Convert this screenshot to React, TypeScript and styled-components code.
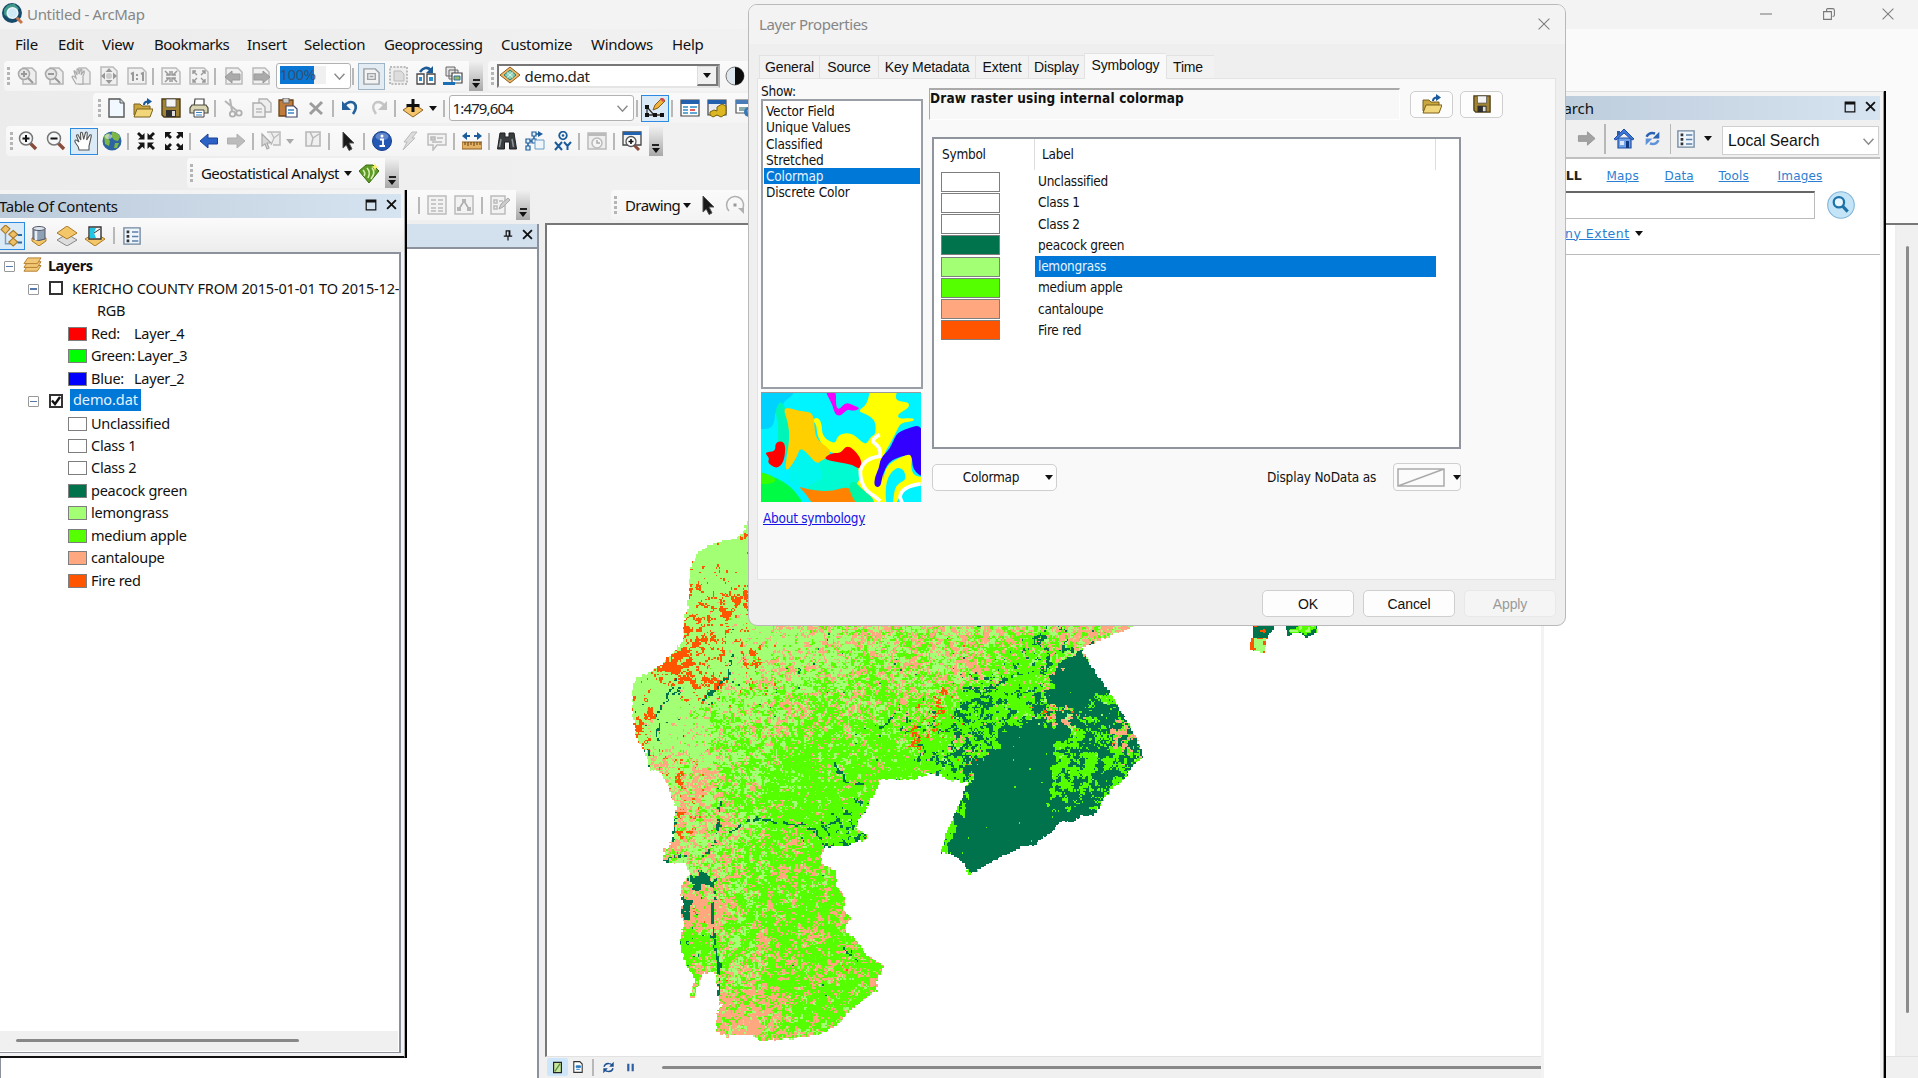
import React from "react";
import styled, { createGlobalStyle, css } from "styled-components";

const UI = `"Noto Sans", "Open Sans", sans-serif`;
const DIALOG = `"DejaVu Sans Condensed", "DejaVu Sans", sans-serif`;
const SYS = `"Liberation Sans", Arial, sans-serif`;

const Global = createGlobalStyle`
  * { box-sizing: border-box; }
  body { margin: 0; overflow: hidden; background: #f0f0f0; }
  svg { display: block; flex: none; }
`;

/* ---------- icons (20 x 20 grid) ---------- */

const glyphs: Record<string, React.ReactNode> = {
  app: (<><circle cx="9.5" cy="9.5" r="9.5" fill="#17496b" /><path d="M2 6q4-6 10-5l4 4-3 7-6 3-5-4z" fill="#3f9a8a" /><circle cx="10" cy="9.500" r="5" fill="#cfe9f7" stroke="#eef4f8" strokeWidth="1.5" /><path d="M14 14l5 5" stroke="#c8744a" strokeWidth="2.8" /></>),
  pageZoomIn: (<><path d="M6 2h9l4 4v12H6z" fill="#eee" stroke="#b4b4b4" strokeWidth="1.5" /><circle cx="7" cy="8" r="5.5" fill="#e6e6e6" stroke="#aaa" strokeWidth="1.6" /><path d="M4 8h6M7 5v6M11 12l5 5" stroke="#999" strokeWidth="2" /></>),
  pageZoomOut: (<><path d="M6 2h9l4 4v12H6z" fill="#eee" stroke="#b4b4b4" strokeWidth="1.5" /><circle cx="7" cy="8" r="5.5" fill="#e6e6e6" stroke="#aaa" strokeWidth="1.6" /><path d="M4 8h6M11 12l5 5" stroke="#999" strokeWidth="2" /></>),
  pagePan: (<><path d="M8 2h7l4 4v12H8z" fill="#eee" stroke="#bbb" strokeWidth="1.5" /><path d="M5 18L1 11q1-2 4 1L3 5q1-1 3 4L6 3q2-1 2 5l2-5q2 0 0 6l3-4q1 1-1 5v8z" fill="#f0f0f0" stroke="#aaa" strokeWidth="1.2" /></>),
  pageFull: (<><path d="M2 1h12l4 4v14H2z" fill="#f0f0f0" stroke="#bbb" strokeWidth="1.5" /><path d="M10 2l3.500 4h-7zM10 18l3.500-4h-7zM2 10l4-3.500v7zM18 10l-4-3.500v7z" fill="#999" /><circle cx="10" cy="10" r="3" fill="#ccc" /></>),
  pageOne: (<><path d="M1 2h14l4 4v12H1z" fill="#f0f0f0" stroke="#bbb" strokeWidth="1.5" /><path d="M4 8l2-1v8M14 8l2-1v8M10 8v2M10 12v2" stroke="#999" strokeWidth="2" fill="none" /></>),
  pageIn: (<><path d="M1 2h14l4 4v12H1z" fill="#f3f3f3" stroke="#bbb" strokeWidth="1.5" /><path d="M4 5l4 4M16 5l-4 4M4 16l4-4M16 16l-4-4M5 9h4V5M11 5v4h4M5 12h4v4M15 12h-4v4" stroke="#999" strokeWidth="1.5" fill="none" /></>),
  pageOut: (<><path d="M1 2h14l4 4v12H1z" fill="#f3f3f3" stroke="#bbb" strokeWidth="1.5" /><path d="M4 8V5h3M4 5l4 4M13 5h3v3M16 5l-4 4M4 13v3h3M4 16l4-4M16 13v3h-3M16 16l-4-4" stroke="#999" strokeWidth="1.4" fill="none" /></>),
  pageBack: (<><path d="M2 2h12l4 4v12H2z" fill="#f0f0f0" stroke="#bbb" strokeWidth="1.5" /><path d="M1 11l7-6v3h8v6H8v3z" fill="#aaa" stroke="#999" /></>),
  pageNext: (<><path d="M2 2h12l4 4v12H2z" fill="#f0f0f0" stroke="#bbb" strokeWidth="1.5" /><path d="M19 11l-7-6v3H3v6h9v3z" fill="#aaa" stroke="#999" /></>),
  pageDraft: (<><path d="M2 2h12l4 4v12H2z" fill="#f3f3f3" stroke="#9aa0a6" strokeWidth="1.5" /><path d="M6 7h8v6H6zM8 10h4" fill="#eee" stroke="#a0a4a8" strokeWidth="1.5" /></>),
  pageFocus: (<><path d="M1 1h17v17H1z" fill="#eee" stroke="#bbb" strokeWidth="2" strokeDasharray="2 1.4" /><path d="M5 5h7l3 3v7H5z" fill="#ddd" stroke="#bbb" /></>),
  layouts: (<><path d="M4 6q5-7 11-2" fill="none" stroke="#1c5c96" strokeWidth="2.6" /><path d="M17 0v7h-7z" fill="#1c5c96" /><path d="M1 8h7v10H1zM11 8h8v10h-8z" fill="#fff" stroke="#444" strokeWidth="1.3" /><path d="M3 11h3v4H3zM13 11h4v4h-4z" fill="#2a8fd0" /></>),
  pagesStack: (<><path d="M3 1h9v9H3zM6 4h9v9H6z" fill="#e5e5e5" stroke="#666" /><path d="M9 7h10v10H9z" fill="#fff" stroke="#444" strokeWidth="1.2" /><path d="M11 10h6v4h-6z" fill="#93b86c" stroke="#2b6e9b" /><path d="M0 16h12v3H0z" fill="#1b6fb5" /></>),
  raster: (<><path d="M10 1l10 8-10 8L0 9z" fill="#efb765" stroke="#8b5a1c" /><path d="M10 4l6 5-6 5-6-5z" fill="#8fd0b8" stroke="#2b7d70" /><path d="M7 6.5l6 5M13 6.5l-6 5" stroke="#d8f4ea" /></>),
  contrast: (<><circle cx="10" cy="10" r="9" fill="#dfe7ee" stroke="#777" /><path d="M10 1a9 9 0 010 18z" fill="#0c0c0c" /></>),
  newDoc: (<><path d="M2 1h11l4 4v14H2z" fill="#f1f8ff" stroke="#555" strokeWidth="1.4" /><path d="M13 1v4h4" fill="#cfd9e2" stroke="#555" /></>),
  open: (<><path d="M1 6h6l2 2h8v9H1z" fill="#c9a63e" stroke="#7a611d" /><path d="M4 11h16l-3 8H1z" fill="#f2d67a" stroke="#7a611d" /><path d="M11 7q0-3.500 4-3.500" fill="none" stroke="#1a5a9a" strokeWidth="2" /><path d="M14 0l5 3.500-5 3.500z" fill="#1a5a9a" /></>),
  save: (<><path d="M1 1h18v18H3l-2-2z" fill="#a18334" stroke="#4c3c12" strokeWidth="1.4" /><path d="M5 1h10v8H5z" fill="#f4f4f4" stroke="#555" strokeWidth=".8" /><path d="M5 12h10v7H5z" fill="#2e2e2e" /><path d="M11 13h3v5h-3z" fill="#ddd" /></>),
  print: (<><path d="M6 1h9v8H5z" fill="#fff" stroke="#444" strokeWidth="1.2" /><path d="M3 7h14l2 3v5H1v-5z" fill="#d8d4b4" stroke="#4c4a3c" strokeWidth="1.2" /><path d="M5 12h10v7H5z" fill="#fff" stroke="#444" /><path d="M7 14.500h6M7 17h6" stroke="#3c86c8" /></>),
  cut: (<><path d="M2 3l12 10M7 1l2 12" stroke="#b5b5b5" strokeWidth="2" /><circle cx="16" cy="15" r="2.700" fill="none" stroke="#b0b0b0" strokeWidth="1.800" /><circle cx="9.500" cy="16" r="2.700" fill="none" stroke="#b0b0b0" strokeWidth="1.800" /></>),
  copy: (<><path d="M7 1h8l4 4v9H7z" fill="#eee" stroke="#b2b2b2" strokeWidth="1.4" /><path d="M1 5h8l4 4v10H1z" fill="#f0f0f0" stroke="#adadad" strokeWidth="1.4" /><path d="M4 11h6M4 14h6" stroke="#bbb" strokeWidth="1.500" /></>),
  paste: (<><path d="M1 2h14v16H1z" fill="#bf7c3a" stroke="#6d4217" strokeWidth="1.3" /><path d="M5 0h6v5H5z" fill="#ccc" stroke="#666" /><path d="M8 8h8l3 3v8H8z" fill="#fff" stroke="#446" strokeWidth="1.2" /><path d="M10 12h6M10 15h6" stroke="#3c86c8" strokeWidth="1.300" /></>),
  del: <path d="M4 5l12 11M16 4L4 16" stroke="#9d9d9d" strokeWidth="3" />,
  undo: (<><path d="M4 8q5-6 10-3 4 4-1 11" fill="none" stroke="#23609c" strokeWidth="2.600" /><path d="M2 3v9h9z" fill="#23609c" /></>),
  redo: (<><path d="M16 8q-5-6-10-3-4 4 1 11" fill="none" stroke="#c6c6c6" strokeWidth="2.400" /><path d="M18 3v9H9z" fill="#c2c2c2" /></>),
  addData: (<><path d="M10 5.500l10 6.500-10 7L0 12z" fill="#f4c56c" stroke="#8f6420" /><path d="M10 1v13M3.500 7.500h13" stroke="#111" strokeWidth="3" /></>),
  editor: (<><path d="M2 9l7 8h9M2 9v8h7" stroke="#333" fill="none" strokeWidth="1.300" /><path d="M0 7h4v4H0zM0 15h4v4H0zM8 15h4v4H8zM15 15h4v4h-4z" fill="#111" /><path d="M8 12l2-5 7-7 3 3-7 7z" fill="#efb23b" stroke="#8a5b18" /><path d="M16 0l3 3" stroke="#d64b4b" strokeWidth="3" /></>),
  tableWin: (<><path d="M1 2h18v16H1z" fill="#fff" stroke="#444" strokeWidth="1.200" /><path d="M1 2h18v4H1z" fill="#2261ad" /><path d="M3 9h5M3 12h5M3 15h5M10 9h7M10 15h7" stroke="#2e8ac8" strokeWidth="1.500" /><path d="M10 12h5" stroke="#d33" strokeWidth="1.600" /></>),
  catalog: (<><path d="M1 2h18v15H1z" fill="#e7ecf2" stroke="#444" strokeWidth="1.200" /><path d="M1 2h18v4H1z" fill="#2261ad" /><path d="M10 9l5-3 4 2v8l-5 3-4-2-4 2-3-2v-3l4-2 3 1z" fill="#dcb722" stroke="#77610c" /></>),
  searchWin: (<><path d="M1 2h18v13H1z" fill="#fff" stroke="#555" strokeWidth="1.200" /><path d="M1 2h18v4H1z" fill="#4a7db8" /><path d="M4 9h12v4H4z" fill="#8aa" /><circle cx="14" cy="14" r="5" fill="#3478b8" /><path d="M12 12q3-2 4 1t-3 3z" fill="#80c060" /></>),
  zoomIn: (<><path d="M12 12l6 6" stroke="#8a4c3a" strokeWidth="3.400" /><circle cx="8" cy="7.500" r="6.500" fill="#f5f7f8" stroke="#777" strokeWidth="1.500" /><path d="M4.500 7.500h7M8 4v7" stroke="#111" strokeWidth="2" /></>),
  zoomOut: (<><path d="M12 12l6 6" stroke="#8a4c3a" strokeWidth="3.400" /><circle cx="8" cy="7.500" r="6.500" fill="#f5f7f8" stroke="#777" strokeWidth="1.500" /><path d="M4.500 7.500h7" stroke="#111" strokeWidth="2" /></>),
  hand: <path d="M5 19q0-3-3-6.500-2-2.500-.5-3.500 1-.5 3.500 2L2.500 5q0-1.600 1.400-1.200L6.800 9 6.500 2q.8-1.600 1.900 0L9.700 8.300 11.500 1.500q1.200-1.200 1.800.4L12.700 9l3.100-5q1.500-.8 1.500.9L16 11l-1 4v4z" fill="#fff" stroke="#555" strokeWidth="1.100" />,
  globe: (<><circle cx="10" cy="10" r="9.500" fill="#2c63a0" /><path d="M10 1q6 0 8 5l-2 4-4-1-3-4zM13 12l4 0-2 5-3 0zM2 5q3-3 6-3L6 7l2 3-1 5-4-2z" fill="#7cb648" /><ellipse cx="6.500" cy="5.500" rx="3.500" ry="2.500" fill="#fff" opacity=".5" /></>),
  fixedIn: <path d="M8.500 2v6.500H2l2.300-2.200L1 3l2-2 3.300 3.300zM11.500 2v6.500H18l-2.300-2.200L19 3l-2-2-3.300 3.300zM8.500 18v-6.500H2l2.300 2.200L1 17l2 2 3.300-3.300zM11.500 18v-6.500H18l-2.300 2.200L19 17l-2 2-3.300-3.300z" fill="#151515" />,
  fixedOut: <path d="M1 1h6.500L5.300 3.200 8 6 6 8 3.200 5.300 1 7.500zM19 1h-6.500l2.200 2.200L12 6l2 2 2.800-2.700L19 7.500zM1 19h6.500l-2.200-2.200L8 14l-2-2-2.800 2.700L1 12.500zM19 19h-6.500l2.200-2.200L12 14l2-2 2.800 2.700 2.200-2.200z" fill="#151515" />,
  back: <path d="M1 10l8-7v4h9.500v6H9v4z" fill="#2c62c6" stroke="#1c439a" />,
  fwd: <path d="M19 10l-8-7v4H1.500v6H11v4z" fill="#bcbcbc" stroke="#b0b0b0" />,
  fwdDark: <path d="M19 10l-8-7v4H1.500v6H11v4z" fill="#a2a2a2" stroke="#979797" />,
  selFeat: (<><path d="M6 1h13v13h-7" fill="#eee" stroke="#bbb" strokeWidth="1.500" /><path d="M10 1l3 6 5-4M13 7l-3 7" fill="none" stroke="#bbb" strokeWidth="1.200" /><path d="M1 3l9 9H6l2 5-2 1-2-5-3 2z" fill="#d9d9d9" stroke="#aaa" strokeWidth="1.200" /></>),
  clearSel: (<><path d="M3 1h14v14H3z" fill="#f0f0f0" stroke="#b8b8b8" strokeWidth="1.600" /><path d="M7 1l3 6 6-4M10 7l-2 8" fill="none" stroke="#b8b8b8" strokeWidth="1.500" /></>),
  cursor: <path d="M5 1l11 11H11l3 6-3 1.500L8.300 14 5 17z" fill="#1a1a1a" stroke="#555" />,
  info: (<><circle cx="10" cy="10" r="9.500" fill="#2358b4" stroke="#163f8c" /><ellipse cx="10" cy="5.500" rx="6.500" ry="3.800" fill="#fff" opacity=".28" /><circle cx="10" cy="5" r="1.500" fill="#fff" /><path d="M8 8.500h3v6M7.500 15h5.500" stroke="#fff" strokeWidth="1.800" fill="none" /></>),
  bolt: <path d="M12 1l5 0-5 6 3 0L3 19l4-8H4z" fill="#dcdcdc" stroke="#bbb" />,
  popup: (<><path d="M1 3h18v11h-9l-4 5v-5H1z" fill="#f2f2f2" stroke="#bdbdbd" strokeWidth="1.500" /><path d="M4 6h4v3H4zM10 7h6M5 11h10" stroke="#bbb" strokeWidth="1.500" fill="#ccc" /></>),
  measure: (<><path d="M0 11h20v7H0z" fill="#e3b264" stroke="#8d5d20" /><path d="M3 11v3M6 11v4M9 11v3M12 11v4M15 11v3M18 11v3" stroke="#5f3c10" /><path d="M0 5l5-4v3h3v2H5v3zM20 5l-5-4v3h-3v2h3v3z" fill="#1b5d9c" /></>),
  find: (<><path d="M3 2h5v4h4V2h5l2.500 16h-7V11h-5v7h-7z" fill="#3a3d40" stroke="#1d1f20" /><path d="M4 8l-1.500 8M15 8l1.500 8" stroke="#8f9498" strokeWidth="1.500" /></>),
  route: (<><path d="M3 17V10h6V3h5" fill="none" stroke="#1b5d9c" strokeWidth="1.500" /><path d="M1 15h4v4H1zM1 8h4v4H1zM7 8h4v4H7zM7 1h4v4H7z" fill="#e6f1fa" stroke="#1b5d9c" strokeWidth="1.200" /><path d="M13 0l5 3-5 3z" fill="#1b5d9c" /><path d="M10 9h9v9h-9z" fill="#eef5fb" stroke="#6a9cc4" /></>),
  xy: (<><circle cx="10" cy="4.500" r="3.800" fill="none" stroke="#1b5d9c" strokeWidth="1.800" /><circle cx="10" cy="4.500" r="1.300" fill="#1b5d9c" /><path d="M2 11l7 8M9 11l-7 8M11 11l3.500 4L18 11M14.500 15v4" stroke="#1b5d9c" strokeWidth="2" fill="none" /></>),
  time: (<><path d="M1 2h18v16H1z" fill="#eee" stroke="#bbb" strokeWidth="1.500" /><path d="M1 2h18v3H1z" fill="#bbb" /><circle cx="10" cy="12" r="5" fill="#f5f5f5" stroke="#bbb" strokeWidth="1.500" /><path d="M10 9v3h3" stroke="#aaa" fill="none" strokeWidth="1.500" /></>),
  viewer: (<><path d="M1 1h18v13H1z" fill="#f4f4f4" stroke="#444" strokeWidth="1.300" /><path d="M1 1h18v3H1z" fill="#2261ad" /><path d="M12 14l5 5" stroke="#8a4c3a" strokeWidth="3" /><circle cx="9" cy="10.500" r="5" fill="#fff" stroke="#555" strokeWidth="1.300" /><path d="M6.500 10.500h5M9 8v5" stroke="#111" strokeWidth="1.600" /></>),
  geostat: (<><path d="M0 8l7-6 7 0 6 6-10 12z" fill="#5d9a26" stroke="#3d6e12" /><path d="M4 7q3 3 1 6M8 5q4 4 1 10M13 5q4 4-1 11" stroke="#d5efae" strokeWidth="1.600" fill="none" /><path d="M16 0l1 3 3 1-3 1-1 3-1-3-3-1 3-1z" fill="#f6ee66" /></>),
  attr: (<><path d="M1 1h18v18H1z" fill="#f2f2f2" stroke="#bcbcbc" strokeWidth="1.500" /><path d="M4 5h5M4 9h5M4 13h5M11 5h5M11 9h5M11 13h5M4 16h5M11 16h5" stroke="#bbb" strokeWidth="1.600" /></>),
  sketch: (<><path d="M1 1h18v18H1z" fill="#f2f2f2" stroke="#bcbcbc" strokeWidth="1.500" /><path d="M5 14l5-8 5 8" stroke="#aaa" strokeWidth="1.500" fill="none" /><path d="M3 12h4v4H3zM8 4h4v4H8zM13 12h4v4h-4z" fill="#b4b4b4" /></>),
  create: (<><path d="M1 1h14v18H1z" fill="#f2f2f2" stroke="#bcbcbc" strokeWidth="1.500" /><path d="M4 5h3v3H4zM4 11h3v3H4zM9 6h4" stroke="#bbb" strokeWidth="1.500" fill="none" /><path d="M9 14l2-5 7-6 2 2-7 7z" fill="#ccc" stroke="#aaa" /></>),
  rotate: (<><path d="M4 16a8.500 8.500 0 1113-1" fill="none" stroke="#b0b0b0" strokeWidth="1.500" /><path d="M13 13h6v6z" fill="#b0b0b0" /><path d="M8.500 8.500h3v3h-3z" fill="#999" /></>),
  byOrder: (<><path d="M5 8v9h5" stroke="#7a9ab8" fill="none" strokeWidth="1.300" /><path d="M5 0l4 3.500L5 8 1 4zM12 5l4 3.500-4 3.500-4-3.500zM12 12l4 3.500-4 3.500-4-3.500z" fill="#f0c068" stroke="#a97924" /><path d="M16 9h4M16 16h4" stroke="#2a6ba5" strokeWidth="1.800" /></>),
  bySource: (<><path d="M10 20l-7-5v-3h14v3z" fill="#f3c769" stroke="#a97924" /><path d="M4 2h12v11q-6 3-12 0z" fill="#8da0b4" stroke="#556" /><ellipse cx="10" cy="2.500" rx="6" ry="2" fill="#dce6ef" stroke="#556" /><path d="M7 5v9" stroke="#e6edf4" strokeWidth="2.500" /></>),
  byVis: (<><path d="M10 8l10 6-10 6-10-6z" fill="#ddd" stroke="#888" /><path d="M10 0l10 7-10 6L0 7z" fill="#f3c769" stroke="#a97924" /></>),
  bySel: (<><path d="M10 7l10 6-10 7-10-7z" fill="#f3c769" stroke="#a97924" /><path d="M4 1h12v12H4z" fill="#f4f4f4" stroke="#333" strokeWidth="1.400" /><path d="M5 2h6l-2 5 2 5H5z" fill="#22c4e4" /><path d="M9 7l6-4" stroke="#333" /></>),
  list: (<><path d="M1 1h18v18H1z" fill="#eef5fb" stroke="#7188a0" strokeWidth="1.500" /><path d="M4 4h3v3H4zM4 9h3v3H4zM4 14h3v3H4z" fill="#333" /><path d="M10 5.500h7M10 10.500h7M10 15.500h7" stroke="#5e7fa8" strokeWidth="1.500" /></>),
  layers: (<g fill="#f2c777" stroke="#b17e2c"><path d="M5 10h14l-4 6H1z" /><path d="M5 6h14l-4 6H1z" /><path d="M5 2h14l-4 6H1z" /></g>),
  home: (<><path d="M4 9h13v10H4z" fill="#6f9fe4" stroke="#1f4fa8" strokeWidth="1.200" /><path d="M10 0l10 10-2 1-8-7-8 7-2-1z" fill="#3e78d6" stroke="#1f4fa8" /><path d="M12 12h3v7h-3z" fill="#12397f" /><path d="M6 12h4v4H6z" fill="#dbe9fb" /><path d="M3 2h3v4H3z" fill="#2b5cb0" /></>),
  refresh: (<><path d="M3 8q3-6 10-4" fill="none" stroke="#2a62b4" strokeWidth="3" /><path d="M18 2v8h-8z" fill="#2a62b4" /><path d="M17 12q-3 6-10 4" fill="none" stroke="#5f93d8" strokeWidth="3" /><path d="M2 18v-8h8z" fill="#5f93d8" /></>),
  searchGo: (<><circle cx="10" cy="10" r="9.500" fill="#c4e4f8" stroke="#84b6d8" strokeWidth=".8" /><circle cx="8.500" cy="8" r="3.700" fill="#e8f6ff" stroke="#1e72a8" strokeWidth="1.600" /><path d="M11.300 11l3.500 3.700" stroke="#1e72a8" strokeWidth="2.200" /></>),
  dataView: (<><path d="M4 2h12v16H4z" fill="#c9e59a" stroke="#222" strokeWidth="1.800" /><path d="M6 16l8-12" stroke="#4f8a3a" strokeWidth="1.800" /></>),
  layoutView: (<><path d="M3 1h10l4 4v14H3z" fill="#fff" stroke="#333" strokeWidth="1.800" /><path d="M7 8h7v3H7zM7 14h6" fill="#2a7cc0" stroke="#2a7cc0" strokeWidth="1.500" /></>),
  refreshSm: (<><path d="M3 9q2-6 8-5 3 0 4 2M17 11q-2 6-8 5-3 0-4-2" fill="none" stroke="#1b5090" strokeWidth="2.200" /><path d="M18 1v8h-7zM2 19v-8h7z" fill="#1b5090" /></>),
  pause: <path d="M4 3h4v14H4zM12 3h4v14h-4z" fill="#2c60a4" />,
  pin: <path d="M6 2h8v9h3v2h-6v6H9v-6H3v-2h3zM8 4v7h3V4z" fill="#111" fillRule="evenodd" />,
  maxi: <path d="M1 1h18v18H1zM3 6v11h14V6z" fill="#111" fillRule="evenodd" />,
  close: <path d="M2 2l16 16M18 2L2 18" stroke="#111" strokeWidth="3.400" />,
  thinClose: <path d="M1 1l18 18M19 1L1 19" stroke="#7b7b7b" strokeWidth="1.700" />,
  minus: <path d="M0 10h20" stroke="#777" strokeWidth="1.700" />,
  restore: <path d="M1 6h13v13H1zM6 5V3q0-2 2-2h8q3 0 3 3v8q0 2-3 2" fill="none" stroke="#777" strokeWidth="1.800" />,
  chevron: <path d="M1 5l9 10 9-10" fill="none" stroke="#8a8a8a" strokeWidth="2.600" />,
};

const Icon = ({ name, size = 20 }: { name: string; size?: number }) => (
  <svg width={size} height={size} viewBox="0 0 20 20">{glyphs[name]}</svg>
);

/* ---------- toolbars ---------- */

const Screen = styled.div`
  position: relative; width: 1918px; height: 1078px; overflow: hidden;
  display: flex; flex-direction: column; color: #111; font: 15px/20px ${UI};
  background: linear-gradient(90deg, #ececec 0, #f0f0f0 30%, #f1f1f1 40%, #fafafa 80%);
  white-space: nowrap;
`;
const TitleBar = styled.header`
  height: 29px; flex: none; display: flex; align-items: center; background: #f3f3f3; color: #868686;
  padding: 0 24.500px 2px 2px; letter-spacing: -0.32px;
  svg:first-child { margin-right: 4px; }
`;
const Grow = styled.span`flex: 1;`;
const WinButtons = styled.span`display: flex; align-items: center; gap: 46.800px;`;
const MenuBar = styled.nav`height: 32px; flex: none; display: flex; align-items: center; padding: 0 0 2px 15px;`;
const MenuItem = styled.span<{ $w: number }>`width: ${(p) => p.$w}px; letter-spacing: ${(p) => (p.$w > 90 ? -0.5 : -0.3)}px; line-height: 30px;`;

const Row = styled.div<{ $h?: number }>`display: flex; flex: none; height: ${(p) => p.$h ?? 32}px;`;
const Bar = styled.div<{ $gap: number; $w: number }>`
  display: flex; align-items: center; flex: none; height: 30px; width: ${(p) => p.$w}px; margin-left: ${(p) => p.$gap}px;
  background: linear-gradient(#fafafa, #f4f4f4); border-radius: 4px 0 0 4px;
`;
const Slot = styled.span<{ $w: number; $gap: number; $on?: boolean }>`
  display: flex; align-items: center; justify-content: center; flex: none;
  width: ${(p) => p.$w}px; height: ${(p) => (p.$on ? 27 : 28)}px; margin-left: ${(p) => p.$gap}px;
  ${(p) => p.$on && css`background: #dbeaf7; border: 1.500px solid #2c8ae0;`}
`;
const Grip = styled.i`width: 3px; height: 18px; background: repeating-linear-gradient(#b5b5b5 0 3px, transparent 3px 5px);`;
const Divider = styled.i<{ $h?: number }>`width: 1.500px; height: ${(p) => p.$h ?? 17}px; background: #b8b8b8;`;
const Caret = styled.i<{ $c?: string }>`border: 4px solid transparent; border-top: 5px solid ${(p) => p.$c ?? "#111"}; border-bottom: 0;`;
const More = styled.span`
  width: 14px; height: 30px; display: flex; flex-direction: column; align-items: center; justify-content: flex-end; gap: 2px; padding-bottom: 3px;
  background: linear-gradient(#f1f1f1, #a8a8a8);
  &::before { content: ""; width: 7px; height: 2px; background: #222; }
`;
const Combo = styled.span<{ $h?: number; $flat?: boolean }>`
  width: 100%; height: ${(p) => p.$h ?? 26}px; display: flex; align-items: center; padding: 0 5px 0 3px; color: #222;
  background: #fff; border: 1.500px solid #b2b2b2; border-radius: 3px;
  ${(p) => p.$flat && css`border: 2px solid #777; border-right-color: #aaa; border-bottom-color: #e5e5e5; border-radius: 0; padding: 0 0 0 1px;`}
`;
const DropButton = styled.span`
  width: 21px; height: 100%; display: flex; align-items: center; justify-content: center; background: #f0f0f0;
  border: 1px solid #ddd; border-right: 2px solid #777; border-bottom: 2px solid #777;
`;
const Percent = styled.span`
  background: linear-gradient(90deg, #0a77d5 34px, #f0f0f0 34px); color: #2d5177; width: 46px; height: 18px; line-height: 17px; margin-top: -3px; margin-left: 0; letter-spacing: -.6px;
`;
const Name = styled.span<{ $l?: number; $sp?: number }>`flex: 1; margin-left: ${(p) => p.$l ?? 0}px; letter-spacing: ${(p) => p.$sp ?? 0}px;`;
const Active = styled.span`display: flex; padding: 3px; background: #e3ecf3; border: 1.500px solid #9fb4c5;`;

type Item = [at: number, what: string | React.ReactNode, width?: number];

/* Items carry their centre; the margins between neighbours follow from it. */
const Toolbar = ({ from, to, gap = 0, items }: { from: number; to: number; gap?: number; items: Item[] }) => {
  let edge = from;
  return (
    <Bar $gap={gap} $w={to - from}>
      {items.map(([at, what, width], i) => {
        let node: React.ReactNode = what;
        let w = width ?? 20;
        let on = false;
        if (what === "|") { node = <Divider />; w = 2; }
        else if (what === ":") { node = <Grip />; w = 3; }
        else if (what === "v") { node = <Caret />; w = 8; }
        else if (what === "vg") { node = <Caret $c="#aaa" />; w = 8; }
        else if (what === "more") { node = <More><Caret /></More>; w = 14; }
        else if (typeof what === "string") {
          on = what.startsWith("*");
          node = <Icon name={what.replace("*", "")} />;
          if (on) w = 28;
        }
        const left = at - w / 2;
        const margin = left - edge;
        edge = left + w;
        return <Slot key={i} $w={w} $gap={margin} $on={on}>{node}</Slot>;
      })}
    </Bar>
  );
};

/* ---------- classified raster ---------- */

const C = { dark: "#00734c", lemon: "#a3ff73", medium: "#55ff00", cant: "#ffa77f", fire: "#ff5500" };
const ORDER = [C.dark, C.lemon, C.medium, C.cant, C.fire];
type P = [number, number];
const pts = (s: string): P[] => s.split(" ").map((q) => q.split(",").map(Number) as P);

const COUNTY = pts("388,50 375,80 362,103 330,112 300,118 275,130 250,150 238,180 233,210 232,240 228,290 218,340 212,395 200,415 180,435 160,460 130,480 92,500 82,530 82,580 86,630 98,680 118,705 126,755 150,760 175,795 180,825 196,860 190,900 188,940 180,970 165,975 165,1012 190,1018 218,1015 232,1045 215,1070 208,1090 213,1130 210,1170 218,1190 207,1235 215,1280 230,1320 248,1345 233,1370 235,1390 242,1390 262,1340 272,1325 300,1325 305,1370 310,1410 318,1415 303,1430 300,1490 330,1503 400,1497 415,1518 440,1512 500,1508 570,1498 600,1478 620,1470 640,1440 690,1395 720,1372 722,1340 740,1303 710,1285 690,1270 675,1240 640,1210 640,1190 655,1170 635,1145 635,1105 612,1080 615,1040 600,1032 578,1020 577,995 585,970 620,972 660,963 695,950 695,938 665,920 680,890 700,850 720,810 730,785 770,783 820,782 850,768 890,772 910,787 945,790 960,788 945,830 925,880 905,930 886,990 905,988 930,1000 950,1020 962,1047 985,1035 1040,1003 1100,972 1130,968 1160,940 1170,938 1200,902 1235,900 1250,885 1290,882 1310,845 1335,810 1365,785 1385,750 1415,722 1417,705 1380,630 1330,540 1290,480 1255,412 1310,390 1355,372 1395,351 1400,335 560,20");
const FORESTS = [
  pts("1180,490 1215,445 1255,412 1290,480 1328,535 1280,555 1245,588 1195,572 1160,560 1178,520"),
  pts("1035,645 1100,635 1140,630 1210,635 1240,655 1185,690 1195,730 1175,760 1180,830 1150,870 1200,880 1290,870 1290,890 1100,985 962,1050 895,985 935,900 965,800 1000,720 1030,690"),
  pts("213,1120 235,1120 230,1190 212,1180"),
  pts("228,1045 270,1050 300,1070 260,1085 230,1075"),
  pts("1140,375 1162,370 1170,388 1140,392"),
];
const RIVERS = [
  "340,930 390,900 430,895 470,905 520,910 560,925 590,965", "165,1010 230,995 280,990 300,960 315,850", "200,490 170,560 150,600 150,680",
  "290,1060 295,1120 290,1200 310,1300 310,1400", "970,560 1050,545 1130,530 1200,545", "930,590 980,560 1010,610", "270,560 330,500 345,430",
  "610,740 640,790 690,800", "585,970 650,968", "600,905 660,920", "196,860 190,900 188,960", "120,700 126,755", "630,1250 665,1290", "1340,740 1370,690",
  "730,640 780,590 790,570", "800,600 780,660", "1000,540 1080,490 1130,480",
].map(pts);
/* x, y, then the share of each class in ORDER, and the reach */
const SITES = [
  [300, 190, 1, 90, 1, 1, 6, 70], [360, 275, 1, 50, 0, 6, 42, 40], [255, 230, 0, 65, 0, 0, 30, 26], [300, 330, 1, 75, 1, 6, 18, 50], [225, 390, 1, 40, 0, 4, 50, 34], [160, 475, 0, 42, 0, 0, 55, 26], [150, 560, 5, 88, 2, 2, 4, 50],
  [340, 420, 3, 83, 3, 3, 7, 60], [100, 620, 3, 50, 3, 14, 28, 35], [275, 515, 2, 58, 2, 4, 32, 35], [390, 480, 2, 55, 4, 18, 22, 40], [520, 400, 4, 60, 10, 22, 1, 90], [800, 400, 2, 38, 22, 36, 1, 110], [1000, 385, 3, 38, 18, 37, 2, 90],
  [1200, 380, 4, 32, 18, 42, 1, 80], [1080, 470, 3, 10, 80, 7, 0, 60], [1150, 440, 20, 8, 52, 15, 3, 40], [400, 600, 2, 45, 25, 26, 1, 90], [520, 520, 2, 42, 25, 30, 1, 90], [720, 520, 2, 26, 42, 28, 1, 100], [780, 660, 5, 20, 60, 13, 1, 90], [600, 760, 1, 13, 71, 14, 0, 120],
  [400, 760, 1, 34, 42, 20, 0, 90], [250, 700, 1, 66, 8, 20, 3, 40], [225, 770, 1, 40, 6, 40, 10, 40], [215, 860, 1, 40, 6, 40, 14, 50], [220, 640, 2, 72, 5, 18, 2, 50], [310, 900, 3, 45, 22, 29, 1, 60], [875, 600, 3, 12, 28, 18, 45, 30], [830, 660, 6, 6, 40, 12, 34, 22], [1000, 590, 33, 7, 55, 4, 1, 60],
  [930, 690, 26, 8, 56, 8, 2, 60], [960, 730, 20, 5, 40, 25, 10, 24], [520, 1120, 1, 13, 60, 25, 0, 100], [350, 1080, 1, 40, 30, 27, 1, 60], [340, 1270, 1, 38, 33, 27, 1, 60], [600, 1300, 2, 13, 55, 29, 2, 110], [370, 1460, 0, 20, 20, 58, 1, 46], [600, 1430, 1, 22, 56, 19, 1, 70],
  [265, 1140, 4, 14, 8, 68, 5, 40], [235, 1260, 14, 8, 74, 5, 0, 34], [275, 1290, 3, 10, 22, 61, 3, 24], [1230, 750, 10, 10, 76, 2, 0, 45], [1310, 720, 44, 8, 40, 4, 1, 50], [1370, 660, 16, 18, 18, 48, 3, 26], [1330, 590, 50, 10, 40, 3, 0, 40], [1180, 600, 34, 22, 12, 20, 14, 34], [1260, 830, 50, 7, 42, 1, 0, 50],
  [925, 900, 15, 5, 78, 2, 0, 34], [650, 950, 25, 10, 60, 4, 4, 50],
];

const hash = (x: number, y: number, s: number) => {
  let h = (x * 374761393 + y * 668265263 + s * 974634777) | 0;
  h = Math.imul(h ^ (h >>> 13), 1274126177);
  h = Math.imul(h ^ (h >>> 15), 2246822519);
  return ((h ^ (h >>> 16)) >>> 0) / 4294967296;
};
const smooth = (x: number, y: number, s: number) => {
  const ix = Math.floor(x), iy = Math.floor(y), u = x - ix, v = y - iy;
  const a = hash(ix, iy, s), b = hash(ix + 1, iy, s), c = hash(ix, iy + 1, s), d = hash(ix + 1, iy + 1, s);
  return (a + (b - a) * u) * (1 - v) + (c + (d - c) * u) * v;
};
const inside = (poly: P[], x: number, y: number) => {
  let r = false;
  for (let i = 0, j = poly.length - 1; i < poly.length; j = i++) {
    const [xi, yi] = poly[i], [xj, yj] = poly[j];
    if (yi > y !== yj > y && x < ((xj - xi) * (y - yi)) / (yj - yi) + xi) r = !r;
  }
  return r;
};
const nearLine = (line: P[], x: number, y: number, d: number) => {
  for (let i = 1; i < line.length; i++) {
    const [ax, ay] = line[i - 1], [bx, by] = line[i];
    const dx = bx - ax, dy = by - ay;
    const t = Math.max(0, Math.min(1, ((x - ax) * dx + (y - ay) * dy) / (dx * dx + dy * dy)));
    if (Math.hypot(x - ax - t * dx, y - ay - t * dy) < d) return true;
  }
  return false;
};

const SX = 2.6133, SY = 2.8;
const classify = (px: number, py: number, x: number, y: number) => {
  const jx = x + (smooth(px / 3, py / 3, 21) - 0.5) * 30, jy = y + (smooth(px / 3, py / 3, 22) - 0.5) * 30;
  if (FORESTS.some((f) => inside(f, jx, jy))) return hash(px, py, 5) > 0.997 ? 2 : 0;
  if (hash(Math.floor(px / 2), Math.floor(py / 2), 9) < 0.62 && RIVERS.some((r) => nearLine(r, (jx + x) / 2, (jy + y) / 2, 3))) return 0;
  const w = [0, 0, 0, 0, 0];
  for (const s of SITES) {
    const dx = x - s[0], dy = y - s[1];
    const g = Math.exp(-(dx * dx + dy * dy) / (2 * s[7] * s[7])) + 1e-7;
    for (let k = 0; k < 5; k++) w[k] += g * s[2 + k];
  }
  const total = w[0] + w[1] + w[2] + w[3] + w[4];
  let best = 0, top = -1e9;
  for (let k = 0; k < 5; k++) {
    const coarse = k === 0 || k === 4;
    const scale = coarse ? 3.2 : 2.2;
    const n = smooth(px / scale, py / scale, 31 + k) * (coarse ? 3.4 : 2.2) + hash(px, py, 41 + k) * (coarse ? 1 : 1.5) + smooth(px / 9, py / 9, 51 + k) * 0.9;
    const v = Math.log(w[k] / total + 0.001) * 0.8 + n;
    if (v > top) { top = v; best = k; }
  }
  return best;
};

const STEP = 1.5;
const buildRaster = () => {
  const out = ["", "", "", "", ""];
  for (let row = 0; row < 348; row++) {
    const py = 520 + row * STEP;
    let start = 0, cur = -1;
    for (let col = 0; col <= 344; col++) {
      const px = 630 + col * STEP;
      const x = (px - 600) * SX, y = (py - 500) * SY;
      let k = -1;
      if (!(px > 752 && py < 622)) {
        const ex = x + (hash(col >> 1, row >> 1, 3) - 0.5) * 6, ey = y + (hash(col >> 1, row >> 1, 4) - 0.5) * 6;
        if (col < 344 && inside(COUNTY, ex, ey)) k = classify(col, row, x, y);
      }
      if (k !== cur) {
        if (cur >= 0) out[cur] += `M${start} ${py}H${px}v${STEP}H${start}z`;
        start = px; cur = k;
      }
    }
  }
  const islets = [pts("1252,622 1273,622 1273,630 1267,635 1263,653 1250,650 1248,647 1252,634"), pts("1284,622 1317,622 1317,632 1305,638 1300,633 1293,633 1287,637")];
  for (let row = 0; row < 22; row++) for (let col = 0; col < 50; col++) {
    const px = 1245 + col * STEP, py = 622 + row * STEP;
    if (!islets.some((p) => inside(p, px, py))) continue;
    const n = smooth(col / 3, row / 3, 77), low = py > 637;
    const k = px > 1280 ? (n > 0.5 ? 0 : n > 0.25 ? 2 : 1) : low ? (n > 0.58 || px < 1253 ? 4 : 1) : n > 0.3 ? 0 : 4;
    out[k] += `M${px} ${py}h${STEP}v${STEP}h-${STEP}z`;
  }
  return out;
};
const RASTER = buildRaster();

const CountyMap = () => (
  <svg width="1350" height="831" viewBox="547 226 1350 831" shapeRendering="crispEdges">
    {RASTER.map((d, i) => <path key={i} d={d} fill={ORDER[i]} />)}
  </svg>
);

/* ---------- main area ---------- */

const Main = styled.main`flex: 1; display: flex; min-height: 0;`;
const LeftDock = styled.section`
  width: 539px; display: flex; flex-direction: column; background: #fff;
  border: solid #8c929c; border-width: 0 2px 0 1px;
`;
const DockTitle = styled.div`
  height: 25px; display: flex; justify-content: flex-end; align-items: center; gap: 8px; padding: 0 4px 2px 0;
  background: #d3e0ee; border-bottom: 2px solid #8c929c;
`;
const Viewer = styled.section`flex: 1; margin-left: 6px; display: flex; flex-direction: column; background: #f0f0f0;`;
const ViewTop = styled.div`height: 834px; display: flex; border-top: 2px solid #777; border-left: 2px solid #777; border-bottom: 1px solid #e2e2e2; margin-top: -1px;`;
const Canvas = styled.div`width: 1350px; background: #fff; border-right: 2px solid #eee; overflow: hidden;`;
const VScroll = styled.div`flex: 1; background: #f0f0f0; display: flex; padding: 21px 0 0 9px; i { width: 3px; height: 767px; background: #8b8b8b; border-radius: 2px; }`;
const Status = styled.div`flex: 1; display: flex; align-items: center; padding: 0 0 1px 2px;`;
const StatusOn = styled.span`width: 21px; height: 18px; display: flex; align-items: center; justify-content: center; background: #cde6fa; border-radius: 2px; margin-right: 4px;`;
const HThumb = styled.i<{ $w: number; $l: number }>`height: 3px; width: ${(p) => p.$w}px; margin-left: ${(p) => p.$l}px; background: #888; border-radius: 2px;`;
const StatusGap = styled.span<{ $w: number; $h?: number }>`width: ${(p) => p.$w}px; height: ${(p) => (p.$h ? `${p.$h}px` : "auto")}; flex: none;`;

/* ---------- floating windows ---------- */

const Floating = styled.aside<{ $x: number; $y: number; $w: number; $h: number }>`
  position: absolute; left: ${(p) => p.$x}px; top: ${(p) => p.$y}px; width: ${(p) => p.$w}px; height: ${(p) => p.$h}px;
  display: flex; flex-direction: column; background: #f3f3f3; border-right: 2px solid #000; overflow: hidden;
`;
const Caption = styled.div<{ $pl?: number }>`
  height: 24px; flex: none; display: flex; align-items: center; padding: 0 4px 0 ${(p) => p.$pl ?? 0}px; margin-right: 3px;
  background: linear-gradient(90deg, #bccbda, #d6e3f1); letter-spacing: -0.1px;
  svg { margin-left: 9px; margin-top: -3px; }
`;
const TocFrame = styled.div`flex: 1; display: flex; flex-direction: column; padding-top: 4px; border-bottom: 2px solid #111; border-right: 1px solid #aaa; min-height: 0;`;
const TocTitle = styled.span`flex: 1; letter-spacing: -0.4px; margin-top: -1px; margin-left: -1px;`;
const TocTools = styled.div`height: 34px; flex: none; display: flex; align-items: center; background: linear-gradient(#fbfbfb, #ececec); padding-top: 1px; svg { margin-right: 8px; }`;
const TocOn = styled.span`width: 25px; height: 28px; display: flex; align-items: center; background: #dbeaf7; border: 1.500px solid #2c8ae0; border-left: 0; margin-right: 4px; flex: none;`;
const Tree = styled.div`
  flex: 1; margin: 0 3px 3px 0; border: 2px solid #8c929c; border-left: 0; border-bottom-width: 1px; background: #fff; overflow: hidden;
  display: flex; flex-direction: column;
`;
const Node = styled.div<{ $l: number; $b?: boolean }>`
  height: 22.48px; flex: none; display: flex; align-items: center; padding-left: ${(p) => p.$l}px; white-space: pre; font-size: 14.500px;
  font-weight: ${(p) => (p.$b ? 700 : 400)}; letter-spacing: ${(p) => (p.$b ? -0.5 : -0.25)}px;
`;
const Fold = styled.i`
  width: 11px; height: 11px; border: 1.500px solid #999; display: flex; align-items: center; justify-content: center; flex: none; margin-top: 3px; border-radius: 1px;
  &::before { content: ""; width: 7px; height: 1.500px; background: #5577aa; }
`;
const Check = styled.i`width: 14px; height: 14px; border: 2px solid #333; background: #fff; display: flex; flex: none; margin: 1px 10px 0 10px;`;
const Swatch = styled.i<{ $c: string; $w?: number; $h?: number }>`
  width: ${(p) => p.$w ?? 19}px; height: ${(p) => p.$h ?? 14}px; background: ${(p) => p.$c}; border: 1.500px solid #7e7e7e; flex: none; margin: ${(p) => (p.$h ? 0 : 2)}px 4px 0 0;
`;
const Picked = styled.span`background: #0078d7; color: #e6f3ff; padding: 0 3px 2px; margin-left: -3px; height: 22px; line-height: 21px; letter-spacing: -0.1px;`;
const ScrollFoot = styled.div`height: 20px; margin: 0 1px 1px 0; padding-bottom: 2px; background: #f0f0f0; display: flex; align-items: center;`;
const LongName = styled.span`letter-spacing: -0.16px; margin-left: -1px;`;

const LEGEND: [string, string][] = [["Unclassified", "#fff"], ["Class 1", "#fff"], ["Class 2", "#fff"], ["peacock green", C.dark], ["lemongrass", C.lemon], ["medium apple", C.medium], ["cantaloupe", C.cant], ["Fire red", C.fire]];
const BANDS: [string, string, string, number][] = [["Red:", "Layer_4", "#f00", 43], ["Green:", "Layer_3", "#0f0", 46], ["Blue:", "Layer_2", "#00f", 43]];

const Contents = () => (
  <Floating $x={0} $y={190} $w={407} $h={868}>
    <TocFrame>
      <Caption><TocTitle>Table Of Contents</TocTitle><Icon name="maxi" size={12} /><Icon name="close" size={11} /></Caption>
      <TocTools>
        <TocOn><Icon name="byOrder" size={22} /></TocOn>
        <Icon name="bySource" /><Icon name="byVis" /><Icon name="bySel" />
        <Divider /><StatusGap $w={8} /><Icon name="list" size={18} />
      </TocTools>
      <Tree>
        <Node $l={4} $b><Fold /><StatusGap $w={8} /><Icon name="layers" size={19} /><StatusGap $w={6} />Layers</Node>
        <Node $l={28}><Fold /><Check /><LongName>KERICHO COUNTY FROM 2015-01-01 TO 2015-12-</LongName></Node>
        <Node $l={97}>RGB</Node>
        {BANDS.map(([a, b, c, w]) => (
          <Node key={a} $l={68}><Swatch $c={c} /><StatusGap $w={w}>{a}</StatusGap>{b}</Node>
        ))}
        <Node $l={28}><Fold /><Check><svg width="10" height="10" viewBox="0 0 10 10"><path d="M1 4.500l3 3.500 5-7" stroke="#111" strokeWidth="2.400" fill="none" /></svg></Check><Picked>demo.dat</Picked></Node>
        {LEGEND.map(([t, c]) => <Node key={t} $l={68}><Swatch $c={c} />{t}</Node>)}
        <Grow />
        <ScrollFoot><HThumb $l={16} $w={283} /></ScrollFoot>
      </Tree>
    </TocFrame>
  </Floating>
);

/* ---------- search window ---------- */

const SearchEdge = styled.div`flex: 1; display: flex; flex-direction: column; border-top: 1px solid #ddd; padding-top: 4px; border-right: 1px solid #999;`;
const SearchTools = styled.div`height: 39px; flex: none; display: flex; align-items: center; padding-left: 36px; border-bottom: 2px solid #c0c0c0; margin-right: 3px; background: #f0f0f0;`;
const SearchBody = styled.div`flex: 1; background: #fff; margin-right: 3px; font: 12.5px/18px "DejaVu Sans", sans-serif; color: #2a7fd2; display: flex; flex-direction: column; border-left: 3px solid #f3f3f3;`;
const Links = styled.div`height: 32px; display: flex; align-items: center; padding-left: 12px; padding-top: 1px; flex: none; b { color: #222; }`;
const Link = styled.u<{ $l: number; $w: number }>`margin-left: ${(p) => p.$l}px; width: ${(p) => p.$w}px; font-size: 12px; letter-spacing: 0.15px;`;
const Query = styled.div`height: 28px; flex: none; display: flex; align-items: center; i { width: 271px; height: 28px; border: 1px solid #bbb; border-top: 2px solid #666; } svg { margin-left: 12px; }`;
const Extent = styled.div`height: 36px; flex: none; display: flex; align-items: center; gap: 6px; padding: 0 0 6px 12px; border-bottom: 1px solid #bbb; u { letter-spacing: .5px; width: 73px; }`;
const SearchSelect = styled.span`width: 157px; height: 29px; display: flex; align-items: center; justify-content: space-between; margin: 3px 0 0 10px; padding: 2px 4px 0 5px; background: #fff; border: 1.500px solid #cfcfcf; font: 15.700px ${SYS};`;

const SearchWindow = () => (
  <Floating $x={1541} $y={91} $w={345} $h={987}>
    <SearchEdge>
      <Caption $pl={6}><Grow>Search</Grow><Icon name="maxi" size={12} /><Icon name="close" size={11} /></Caption>
      <SearchTools>
        <Icon name="fwdDark" size={19} /><StatusGap $w={8} /><Divider $h={30} /><StatusGap $w={8} /><Icon name="home" /><StatusGap $w={10} /><Icon name="refresh" size={17} />
        <StatusGap $w={9} /><Divider $h={30} /><StatusGap $w={6} /><Icon name="list" size={18} /><StatusGap $w={9} /><Caret />
        <SearchSelect>Local Search<Icon name="chevron" size={11} /></SearchSelect>
      </SearchTools>
      <SearchBody>
        <Links><b>ALL</b><Link $l={25} $w={33}>Maps</Link><Link $l={25} $w={29}>Data</Link><Link $l={25} $w={34}>Tools</Link><Link $l={25} $w={47}>Images</Link></Links>
        <Query><i /><Icon name="searchGo" size={28} /></Query>
        <Extent><u>Any Extent</u><Caret /></Extent>
      </SearchBody>
    </SearchEdge>
  </Floating>
);

/* ---------- layer properties dialog ---------- */

const Dialog = styled.section`
  position: absolute; left: 748px; top: 4px; width: 818px; height: 622px; display: flex; flex-direction: column;
  background: #efefef; border: 1.500px solid #b9b9b9; border-radius: 9px; font: 13.5px/16px ${DIALOG}; letter-spacing: -0.25px; overflow: hidden;
`;
const DialogTitle = styled.header`height: 39px; flex: none; display: flex; align-items: center; justify-content: space-between; padding: 0 15px 2px 10px; background: #f3f3f3; color: #868686; font: 15px ${UI}; letter-spacing: -0.42px;`;
const Tabs = styled.div`height: 34px; flex: none; display: flex; align-items: flex-end; padding-left: 10px; font: 14px ${SYS}; letter-spacing: -0.15px;`;
const Tab = styled.span<{ $w: number; $on?: boolean }>`
  width: ${(p) => p.$w}px; height: ${(p) => (p.$on ? 26 : 23)}px; display: flex; align-items: center; justify-content: center; margin-bottom: ${(p) => (p.$on ? -1 : 0)}px;
  background: ${(p) => (p.$on ? "#f9f9f9" : "#f2f2f2")}; border: 1px solid #e2e2e2; border-bottom: 0; border-right: 0; padding-bottom: ${(p) => (p.$on ? 4 : 1)}px;
  z-index: ${(p) => (p.$on ? 1 : 0)};
  &:last-child { padding-right: 5px; }
`;
const Page = styled.div`height: 502px; margin: 0 9px 0 8px; flex: none; display: flex; background: #f9f9f9; border: 1px solid #e3e3e3; padding-left: 3px;`;
const ShowCol = styled.div`width: 162px; display: flex; flex-direction: column; padding-top: 4px; flex: none;`;
const ListBox = styled.div`height: 290px; border: 2px solid #9a9fa7; background: #fff; padding: 2px 1px; letter-spacing: -0.15px;`;
const Option = styled.div<{ $on?: boolean }>`
  height: 16.3px; line-height: 16px; padding-left: 2px; background: ${(p) => (p.$on ? "#0078d7" : "none")}; color: ${(p) => (p.$on ? "#e6f3ff" : "inherit")};
`;
const About = styled.a`color: #1414e6; text-decoration: underline; margin: 8px 0 0 2px;`;
const Right = styled.div`flex: 1; padding: 9px 0 0 6px;`;
const HeadRow = styled.div`display: flex; align-items: center; height: 32px;`;
const Heading = styled.div`width: 471px; height: 32px; border: 1px solid #fff; border-top: 2px solid #aaa; border-left: 1.500px solid #aaa; font-weight: 700; line-height: 17px; letter-spacing: 0.15px; background: #f8f8f8;`;
const PushButton = styled.span<{ $w: number; $ml?: number; $off?: boolean }>`
  width: ${(p) => p.$w}px; height: 27px; margin-left: ${(p) => p.$ml ?? 0}px; display: flex; align-items: center; justify-content: center; background: ${(p) => (p.$off ? "#f5f5f5" : "#fdfdfd")};
  border: 1.500px solid ${(p) => (p.$off ? "#e8e8e8" : "#cfcfcf")}; border-radius: 5px; color: ${(p) => (p.$off ? "#9a9a9a" : "#111")};
`;
const Table = styled.div`width: 529px; height: 312px; margin: 17px 0 0 3px; border: 2px solid #8f949d; background: #fff;`;
const HeadCells = styled.div`height: 32px; display: flex; align-items: flex-start; padding-left: 8px;`;
const HeadCell = styled.span<{ $w: number; $pl?: number }>`width: ${(p) => p.$w}px; padding-left: ${(p) => p.$pl ?? 0}px; height: 31px; line-height: 31px; border-right: 1.500px solid #ddd;`;
const Entry = styled.div`height: 21.25px; display: flex; align-items: center; padding-left: 7px;`;
const EntryLabel = styled.span<{ $on?: boolean }>`
  width: 401px; height: 21px; line-height: 20px; margin-left: 31px; padding-left: 3px; background: ${(p) => (p.$on ? "#0078d7" : "none")}; color: ${(p) => (p.$on ? "#e6f3ff" : "inherit")};
`;
const Foot = styled.div`display: flex; align-items: center; margin-top: 14px; padding-left: 3px;`;
const FootLabel = styled.span`width: 113px; margin-left: 210px; letter-spacing: -0.15px;`;
const NoData = styled.span`width: 68px; height: 28px; display: flex; align-items: center; gap: 4px; margin-left: 13px; padding: 0 4px 0 3px; border: 1.500px solid #cfcfcf; border-radius: 4px; background: #fbfbfb;`;
const Buttons = styled.div`flex: 1; display: flex; justify-content: flex-end; padding: 10px 9px 0 0; gap: 9px; font: 14px ${SYS}; letter-spacing: -0.1px;`;

/* Closed outline whose corners are rounded through the edge midpoints. */
const blob = (s: string) => {
  const p = pts(s);
  const mid = (a: P, b: P) => `${(a[0] + b[0]) / 2} ${(a[1] + b[1]) / 2}`;
  return p.reduce((d, a, i) => `${d}Q${a[0]} ${a[1]} ${mid(a, p[(i + 1) % p.length])}`, `M${mid(p[p.length - 1], p[0])}`) + "z";
};
const PATCHES: [string, string][] = [
  ["50,20 175,20 160,50 135,65 130,85 110,90 105,135 90,148 66,148 50,148", "#00d2ff"],
  ["125,65 140,85 150,130 150,200 138,240 130,200 115,185 118,130 108,100 115,80", "#00f5b8"],
  ["395,20 480,20 465,65 510,68 510,85 475,105 480,118 525,115 525,125 485,130 475,150 455,190 430,230 430,300 460,340 440,380 380,380 350,330 355,280 362,240 325,205 300,222 270,218 235,175 232,130 215,125 235,112 248,130 250,172 290,195 295,165 340,158 380,200 395,170 410,165 410,125 385,105 355,95 385,75", "#ff0"],
  ["130,80 180,95 215,98 225,115 228,165 240,185 280,215 260,235 235,255 205,225 182,205 175,230 145,275 138,260 152,180 148,130", "#ffcf00"],
  ["150,270 180,240 182,205 200,215 230,250 270,290 250,320 200,325 150,310", "#00f7ef"],
  ["230,245 280,235 340,250 365,275 360,310 320,330 240,335 190,325 260,295", "#00fbd3"],
  ["75,218 110,215 108,190 130,183 140,200 135,245 115,268 85,250 92,235", "#f00"],
  ["250,238 280,218 305,222 325,193 365,230 370,272 340,255 300,248", "#f00"],
  ["255,30 292,30 290,80 300,92 320,68 345,78 365,88 340,95 325,88 305,110 288,105 280,75", "#f400ff"],
  ["560,130 490,152 470,165 455,205 425,235 420,265 408,290 405,320 425,322 430,285 450,245 485,230 520,225 520,270 560,300", "#3100ff"],
  ["430,300 445,255 490,230 520,222 515,270 530,290 560,292 560,310 490,325 470,380 440,380", "#ff0"],
  ["440,380 440,300 470,262 495,268 502,300 480,308 465,330 462,380", "#00f4ff"],
  ["50,280 90,285 135,305 170,335 200,380 50,380", "#00fb45"],
  ["50,275 90,283 115,300 95,312 50,312", "#35ff00"],
  ["175,318 215,330 275,335 330,318 345,345 365,380 225,380 200,340", "#ff8300"],
  ["325,320 345,300 365,325 400,350 410,380 355,380", "#00f5a4"],
];
const Preview = () => (
  <svg width="160" height="110" viewBox="66 38 480 328" preserveAspectRatio="none">
    <rect x="66" y="38" width="480" height="328" fill="#00f4ff" />
    {PATCHES.map(([d, c]) => <path key={d} d={blob(d)} fill={c} />)}
    <path d="M422 165q-28 15-16 25 22 15 16 40-50 5-58 45 0 50 40 72l20 16M545 312q-60 8-62 40l8 20" fill="none" stroke="#fff" strokeWidth="11" />
    <path d="M66 39h480" stroke="#999" strokeWidth="4" />
  </svg>
);

const LayerProperties = () => (
  <Dialog>
    <DialogTitle>Layer Properties<Icon name="thinClose" size={12} /></DialogTitle>
    <Tabs>
      <Tab $w={60}>General</Tab><Tab $w={59}>Source</Tab><Tab $w={97}>Key Metadata</Tab><Tab $w={53}>Extent</Tab><Tab $w={56}>Display</Tab><Tab $w={82} $on>Symbology</Tab><Tab $w={48}>Time</Tab>
    </Tabs>
    <Page>
      <ShowCol>
        Show:
        <ListBox>
          {["Vector Field", "Unique Values", "Classified", "Stretched", "Colormap", "Discrete Color"].map((t) => <Option key={t} $on={t === "Colormap"}>{t}</Option>)}
        </ListBox>
        <StatusGap $w={1} $h={3} />
        <Preview />
        <About>About symbology</About>
      </ShowCol>
      <Right>
        <HeadRow>
          <Heading>Draw raster using internal colormap</Heading>
          <PushButton $w={43} $ml={10}><Icon name="open" /></PushButton>
          <PushButton $w={43} $ml={7}><Icon name="save" size={18} /></PushButton>
        </HeadRow>
        <Table>
          <HeadCells><HeadCell $w={93}>Symbol</HeadCell><HeadCell $w={401} $pl={7}>Label</HeadCell></HeadCells>
          {LEGEND.map(([t, c]) => <Entry key={t}><Swatch $c={c} $w={59} $h={20} /><EntryLabel $on={t === "lemongrass"}>{t}</EntryLabel></Entry>)}
        </Table>
        <Foot>
          <PushButton $w={125}><StatusGap $w={27} />Colormap<StatusGap $w={26} /><Caret /></PushButton>
          <FootLabel>Display NoData as</FootLabel>
          <NoData><svg width="48" height="19" viewBox="0 0 48 19"><path d="M1 1h46v17H1zM1 18L47 1" fill="none" stroke="#aaa" strokeWidth="1.500" /></svg><Divider /><Caret /></NoData>
        </Foot>
      </Right>
    </Page>
    <Buttons><PushButton $w={92}>OK</PushButton><PushButton $w={92}>Cancel</PushButton><PushButton $w={92} $off>Apply</PushButton></Buttons>
  </Dialog>
);

/* ---------- application ---------- */

const MENU: [string, number][] = [["File", 43], ["Edit", 44], ["View", 52], ["Bookmarks", 93], ["Insert", 57], ["Selection", 80], ["Geoprocessing", 117], ["Customize", 90], ["Windows", 81], ["Help", 60]];

export default function App() {
  return (
    <Screen>
      <Global />
      <TitleBar><Icon name="app" size={21} />Untitled - ArcMap<Grow /><WinButtons><Icon name="minus" size={12} /><Icon name="restore" size={12} /><Icon name="thinClose" size={12} /></WinButtons></TitleBar>
      <MenuBar>{MENU.map(([t, w]) => <MenuItem key={t} $w={w}>{t}</MenuItem>)}</MenuBar>
      <Row>
        <Toolbar from={4} to={483} gap={4} items={[[8.500, ":"], [27, "pageZoomIn"], [54, "pageZoomOut"], [81, "pagePan"], [109, "pageFull"], [137, "pageOne"], [153, "|"], [171, "pageIn"], [199, "pageOut"], [215, "|"], [234, "pageBack"], [261, "pageNext"],
          [313, <Combo key="c"><Percent>100%</Percent><Grow /><Icon name="chevron" size={11} /></Combo>, 75], [353, "|"], [371, <Active key="a"><Icon name="pageDraft" size={19} /></Active>, 28], [399, "pageFocus"], [426, "layouts"], [453, "pagesStack"], [476, "more"]]} />
        <Toolbar from={488} to={790} gap={5} items={[[492, ":"], [608, <Combo key="c" $flat $h={24}><Icon name="raster" /><Name $l={5} $sp={-0.35}>demo.dat</Name><DropButton><Caret /></DropButton></Combo>, 223], [735, "contrast", 18]]} />
      </Row>
      <Row $h={33}>
        <Toolbar from={93} to={790} gap={93} items={[[99, ":"], [117, "newDoc"], [143, "open"], [171, "save", 18], [199, "print"], [215, "|"], [233, "cut"], [262, "copy"], [288, "paste"], [316, "del"], [333, "|"], [350, "undo"], [379, "redo"], [395, "|"], [413, "addData"], [433, "v"], [444, "|"],
          [541, <Combo key="c"><Name $sp={-0.85}>1:479,604</Name><Icon name="chevron" size={11} /></Combo>, 185], [637, "|"], [655, "*editor"], [672, "|"], [690, "tableWin"], [717, "catalog"], [745, "searchWin"]]} />
      </Row>
      <Row>
        <Toolbar from={6} to={663} gap={6} items={[[11, ":"], [28, "zoomIn"], [56, "zoomOut"], [83.500, "*hand"], [112, "globe"], [128, "|"], [146, "fixedIn"], [174, "fixedOut"], [190, "|"], [209, "back"], [236, "fwd"], [253, "|"], [271, "selFeat"], [290, "vg"], [313, "clearSel"], [329, "|"], [348, "cursor"], [364, "|"], [382, "info"], [410, "bolt"], [437, "popup"], [454, "|"], [472, "measure"], [489, "|"], [507, "find"], [535, "route"], [563, "xy"], [579, "|"], [597, "time"], [614, "|"], [632, "viewer"], [655.500, "more"]]} />
      </Row>
      <Row>
        <Toolbar from={187} to={399} gap={187} items={[[191, ":"], [272, <Name key="n" $sp={-0.55}>Geostatistical Analyst</Name>, 142], [348, "v"], [369, "geostat"], [392, "more"]]} />
      </Row>
      <Row $h={34}>
        <Toolbar from={400} to={530} gap={400} items={[[419, "|"], [437, "attr"], [464, "sketch"], [482, "|"], [500, "create"], [523, "more"]]} />
        <Toolbar from={611} to={790} gap={81} items={[[615, ":"], [653, <Name key="n" $sp={-0.6}>Drawing</Name>, 56], [687, "v"], [708, "cursor"], [735, "rotate"]]} />
      </Row>
      <Main>
        <LeftDock><DockTitle><Icon name="pin" size={12} /><Icon name="close" size={11} /></DockTitle></LeftDock>
        <Viewer>
          <ViewTop><Canvas><CountyMap /></Canvas><VScroll><i /></VScroll></ViewTop>
          <Status>
            <StatusOn><Icon name="dataView" size={13} /></StatusOn><Icon name="layoutView" size={12} /><StatusGap $w={8} /><Divider /><StatusGap $w={8} /><Icon name="refreshSm" size={13} /><StatusGap $w={10} /><Icon name="pause" size={11} /><HThumb $l={26} $w={881} />
          </Status>
        </Viewer>
      </Main>
      <SearchWindow />
      <Contents />
      <LayerProperties />
    </Screen>
  );
}
